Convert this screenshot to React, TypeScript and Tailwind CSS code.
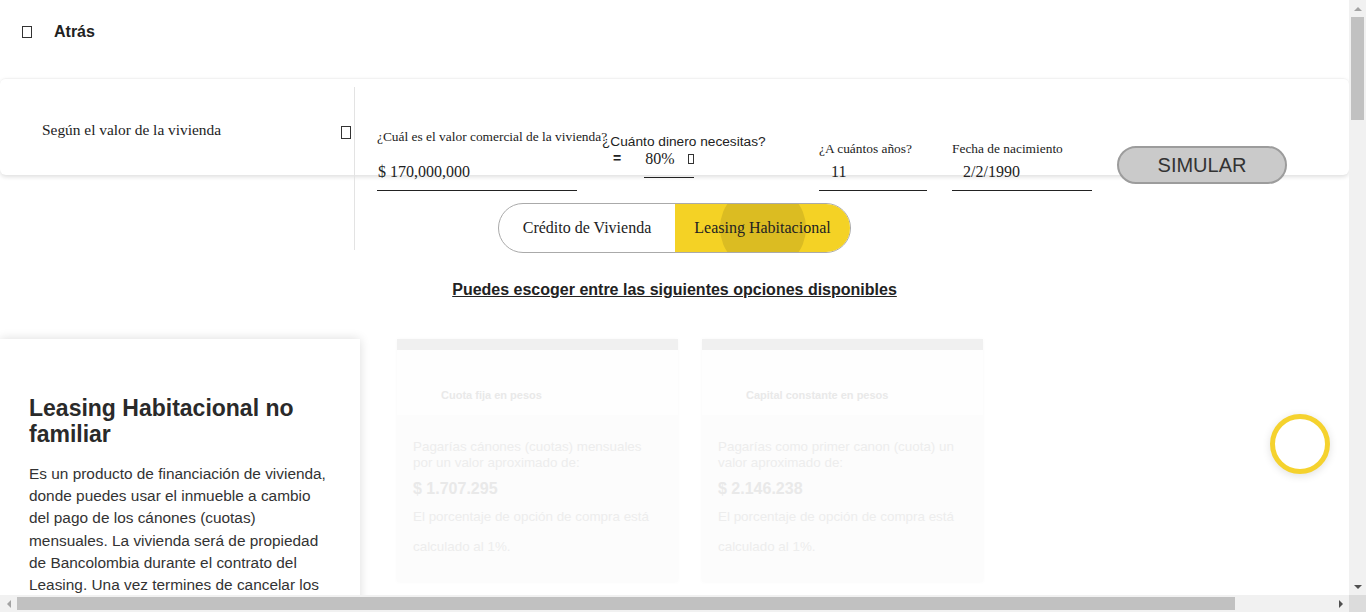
const serif = "font-['Liberation_Serif','Times_New_Roman',serif]";

const Tofu = ({ className = "" }: { className?: string }) => (
  <span className={`inline-block border border-[#333] ${className}`} />
);

const ScrollArrow = ({ dir, light }: { dir: "up" | "down" | "left" | "right"; light?: boolean }) => {
  const pts = {
    up: "0,4 4,0 8,4",
    down: "0,0 8,0 4,4",
    left: "4,0 4,8 0,4",
    right: "0,0 4,4 0,8",
  }[dir];
  const horiz = dir === "left" || dir === "right";
  return (
    <div className="w-[17px] h-[17px] flex items-center justify-center shrink-0">
      <svg width={horiz ? 4 : 8} height={horiz ? 8 : 4} viewBox={horiz ? "0 0 4 8" : "0 0 8 4"}>
        <polygon points={pts} fill={light ? "#a3a3a3" : "#505050"} />
      </svg>
    </div>
  );
};

const Field = ({
  label,
  value,
  width,
  top,
  gap,
  pad,
}: {
  label: string;
  value: string;
  width: string;
  top: string;
  gap: string;
  pad: string;
}) => (
  <div className={`${width} ${top} shrink-0`}>
    <div className={`${serif} text-[13.4px] leading-[16px] text-[#222] whitespace-nowrap`}>{label}</div>
    <div className={`${gap} ${pad} h-[31px] pt-[2px] border-b border-[#222] ${serif} text-[16px] leading-[20px] text-[#222]`}>
      {value}
    </div>
  </div>
);

const OptionCard = ({
  title,
  lead,
  amount,
  indent,
}: {
  title: string;
  lead: string;
  amount: string;
  indent: string;
}) => (
  <div className="w-[281px] shrink-0 shadow-[0_0_4px_rgba(0,0,0,0.03)]">
    <div className="h-[11px] bg-[#f0f0f0]" />
    <div className={`h-[65px] bg-[#fefefe] ${indent} pt-[38px] text-[11px] leading-[14px] font-bold text-[#e9e9e9]`}>
      {title}
    </div>
    <div className="h-[167px] bg-[#fcfcfc] px-[16px] pt-[24px] text-[#ededed]">
      <p className="text-[13.4px] leading-[16px] w-[250px]">{lead}</p>
      <p className="mt-[8px] text-[16px] leading-[20px] font-bold text-[#e9e9e9]">{amount}</p>
      <p className="mt-[3px] text-[13.4px] leading-[30px]">
        El porcentaje de opción de compra está
        <br />
        calculado al 1%.
      </p>
    </div>
  </div>
);

const bodyLines = [
  "Es un producto de financiación de vivienda,",
  "donde puedes usar el inmueble a cambio",
  "del pago de los cánones (cuotas)",
  "mensuales. La vivienda será de propiedad",
  "de Bancolombia durante el contrato del",
  "Leasing. Una vez termines de cancelar los",
];

export default function App() {
  return (
    <div className="w-[1366px] h-[612px] flex flex-col overflow-hidden bg-white font-['Liberation_Sans',Arial,sans-serif] text-[#222]">
      <div className="flex flex-1 min-h-0">
        <main className="relative flex-1 overflow-hidden">
          {/* back */}
          <div className="h-[78px] pt-[22px] pl-[22px] flex items-start">
            <div className="h-[20px] flex items-center">
              <Tofu className="w-[10px] h-[12px]" />
              <span className="ml-[22px] text-[16px] leading-[20px] font-bold text-[#222]">Atrás</span>
            </div>
          </div>

          {/* simulator card */}
          <div className="h-[97px] rounded-[6px] border-t border-[#f2f2f2] shadow-[0_2px_4px_rgba(0,0,0,0.13)] flex items-start">
            <div className="w-[355px] shrink-0 mt-[8px] h-[163px] border-r border-[#e3e3e3] flex items-start justify-between pl-[42px] pr-[3px] pt-[33px]">
              <span className={`${serif} text-[15.4px] leading-[20px] text-[#222]`}>Según el valor de la vivienda</span>
              <Tofu className="w-[10px] h-[13px] mt-[6px]" />
            </div>
            <div className="flex items-start pl-[22px]">
              <Field
                label="¿Cuál es el valor comercial de la vivienda?"
                value="$ 170,000,000"
                width="w-[200px]"
                top="mt-[50px]"
                gap="mt-[15px]"
                pad="pl-[1px]"
              />
              <div className="ml-[25px] w-[192px] mt-[55px] shrink-0">
                <div className="text-[13.7px] leading-[16px] text-[#222] whitespace-nowrap">¿Cuánto dinero necesitas?</div>
                <div className="flex items-start">
                  <span className="ml-[11px] text-[14px] leading-[16px] font-bold">=</span>
                  <div className="ml-[23px] w-[50px] h-[28px] border-b border-[#222] flex items-start">
                    <span className={`${serif} pl-[1px] text-[16px] leading-[18px]`}>80%</span>
                    <Tofu className="ml-[13px] mt-[4px] w-[7px] h-[10px]" />
                  </div>
                </div>
              </div>
              <Field
                label="¿A cuántos años?"
                value="11"
                width="ml-[25px] w-[108px]"
                top="mt-[62px]"
                gap="mt-[3px]"
                pad="pl-[12px]"
              />
              <Field
                label="Fecha de nacimiento"
                value="2/2/1990"
                width="ml-[25px] w-[140px]"
                top="mt-[62px]"
                gap="mt-[3px]"
                pad="pl-[11px]"
              />
              <button className="ml-[25px] mt-[67px] w-[170px] h-[38px] shrink-0 rounded-full bg-[#cacaca] border-2 border-[#9c9c9c] text-[20px] leading-[24px] text-[#333]">
                SIMULAR
              </button>
            </div>
          </div>

          {/* product toggle */}
          <div className="mt-[28px] flex justify-center">
            <div className="w-[353px] h-[50px] rounded-full border border-[#aaa] overflow-hidden flex">
              <div className={`w-[176px] flex items-center justify-center ${serif} text-[16px] text-[#222]`}>
                Crédito de Vivienda
              </div>
              <div className="relative flex-1 bg-[#f4d225] flex items-center justify-center overflow-hidden">
                <span className="absolute left-[45px] top-[-19px] w-[86px] h-[86px] rounded-full bg-[#dbbc22]" />
                <span className={`relative ${serif} text-[16px] text-[#222]`}>Leasing Habitacional</span>
              </div>
            </div>
          </div>

          <p className="mt-[27px] text-center text-[16px] leading-[20px] font-bold underline text-[#222]">
            Puedes escoger entre las siguientes opciones disponibles
          </p>

          {/* options */}
          <div className="mt-[39px] flex items-start">
            <div className="w-[360px] h-[300px] shrink-0 bg-white shadow-[0_0_10px_rgba(0,0,0,0.14)] pl-[29px] pr-[20px] pt-[56px]">
              <h2 className="text-[23px] leading-[26px] font-bold text-[#2a2a2a]">Leasing Habitacional no familiar</h2>
              <p className="mt-[16px] text-[15.4px] leading-[22.2px] text-[#333] whitespace-nowrap">
                {bodyLines.map((line) => (
                  <span key={line} className="block">
                    {line}
                  </span>
                ))}
              </p>
            </div>
            <div className="ml-[37px]">
              <OptionCard
                title="Cuota fija en pesos"
                lead="Pagarías cánones (cuotas) mensuales por un valor aproximado de:"
                amount="$ 1.707.295"
                indent="pl-[44px]"
              />
            </div>
            <div className="ml-[24px]">
              <OptionCard
                title="Capital constante en pesos"
                lead="Pagarías como primer canon (cuota) un valor aproximado de:"
                amount="$ 2.146.238"
                indent="pl-[44px]"
              />
            </div>
          </div>

          {/* floating help button */}
          <div className="absolute left-[1270px] top-[414px] w-[60px] h-[60px] rounded-full border-[5px] border-[#f5d22e] bg-white shadow-[0_2px_8px_rgba(0,0,0,0.12)]" />
        </main>

        {/* vertical scrollbar */}
        <div className="w-[17px] bg-[#f1f1f1] flex flex-col">
          <ScrollArrow dir="up" light />
          <div className="mx-[2px] h-[103px] bg-[#c1c1c1]" />
          <div className="flex-1" />
          <ScrollArrow dir="down" />
        </div>
      </div>

      {/* horizontal scrollbar */}
      <div className="h-[17px] flex bg-[#f1f1f1]">
        <ScrollArrow dir="left" light />
        <div className="my-[2px] w-[1218px] bg-[#c1c1c1]" />
        <div className="flex-1" />
        <ScrollArrow dir="right" />
        <div className="w-[17px] bg-[#dcdcdc]" />
      </div>
    </div>
  );
}
